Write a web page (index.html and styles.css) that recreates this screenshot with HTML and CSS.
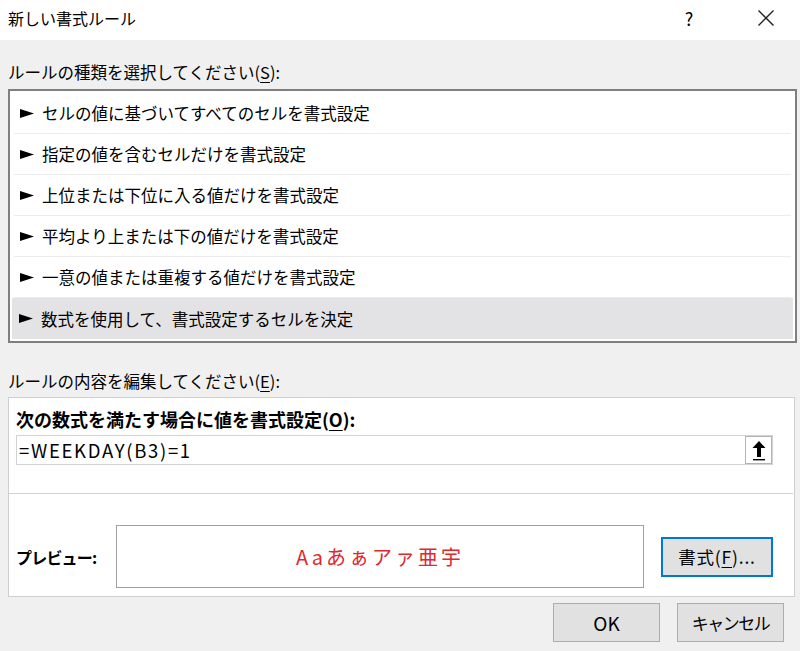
FILE: index.html
```html
<!DOCTYPE html>
<html lang="ja">
<head>
<meta charset="utf-8">
<link rel="stylesheet" href="styles.css">
</head>
<body>
<div class="dialog">
  <div class="titlebar">
    <div class="title">新しい書式ルール</div>
    <div class="tb-btn help">?</div>
    <div class="tb-btn close">
      <svg width="18" height="18" viewBox="0 0 18 18"><path d="M1.5 1.5 L16.5 16.5 M16.5 1.5 L1.5 16.5" stroke="#222" stroke-width="1.4" fill="none"/></svg>
    </div>
  </div>
  <div class="body">
    <div class="label lbl1">ルールの種類を選択してください(<u>S</u>):</div>
    <div class="listbox">
      <div class="row"><svg class="tri" width="14" height="9" viewBox="0 0 14 9"><path d="M0 0 L14 4.5 L0 9 Z" fill="#000"/></svg>セルの値に基づいてすべてのセルを書式設定</div>
      <div class="row"><svg class="tri" width="14" height="9" viewBox="0 0 14 9"><path d="M0 0 L14 4.5 L0 9 Z" fill="#000"/></svg>指定の値を含むセルだけを書式設定</div>
      <div class="row"><svg class="tri" width="14" height="9" viewBox="0 0 14 9"><path d="M0 0 L14 4.5 L0 9 Z" fill="#000"/></svg>上位または下位に入る値だけを書式設定</div>
      <div class="row"><svg class="tri" width="14" height="9" viewBox="0 0 14 9"><path d="M0 0 L14 4.5 L0 9 Z" fill="#000"/></svg>平均より上または下の値だけを書式設定</div>
      <div class="row"><svg class="tri" width="14" height="9" viewBox="0 0 14 9"><path d="M0 0 L14 4.5 L0 9 Z" fill="#000"/></svg>一意の値または重複する値だけを書式設定</div>
      <div class="row selected"><svg class="tri" width="14" height="9" viewBox="0 0 14 9"><path d="M0 0 L14 4.5 L0 9 Z" fill="#000"/></svg>数式を使用して、書式設定するセルを決定</div>
    </div>
    <div class="label lbl2">ルールの内容を編集してください(<u>E</u>):</div>
    <div class="panel">
      <div class="bold-label main">次の数式を満たす場合に値を書式設定(<u>O</u>):</div>
      <div class="input">
        <span class="formula">=WEEKDAY(B3)=1</span>
        <span class="refbtn">
          <svg width="18" height="22" viewBox="0 0 18 22"><path d="M9 2 L2.5 9 H7 V18 H11 V9 H15.5 Z" fill="#000"/><rect x="3" y="20" width="12" height="1.4" fill="#000"/></svg>
        </span>
      </div>
      <div class="sep"></div>
      <div class="preview-row">
        <div class="bold-label pv">プレビュー:</div>
        <div class="preview">Aaあぁアァ亜宇</div>
        <div class="btn fmt">書式(<u>F</u>)...</div>
      </div>
    </div>
    <div class="buttons">
      <div class="btn ok">OK</div>
      <div class="btn cancel">キャンセル</div>
    </div>
  </div>
</div>
</body>
</html>
```

FILE: styles.css
```css
html, body {
  margin: 0;
  padding: 0;
  width: 800px;
  height: 651px;
  overflow: hidden;
  background: #f0f0f0;
}
.dialog {
  font-family: "Noto Sans CJK JP", "Noto Sans", sans-serif;
  font-size: 16.5px;
  color: #000;
  width: 800px;
  height: 651px;
}
u { text-decoration-thickness: 1px; text-underline-offset: 3px; }
.titlebar {
  height: 40px;
  background: #fff;
  display: flex;
  align-items: center;
}
.title {
  padding-left: 8px;
  flex: 1;
  font-size: 16px;
  line-height: 20px;
  margin-top: -4px;
}
.tb-btn {
  display: flex;
  align-items: center;
  justify-content: center;
  margin-top: -4px;
}
.help {
  width: 30px;
  font-size: 18px;
  margin-right: 47px;
}
.close {
  width: 30px;
  margin-right: 19px;
}
.body {
  padding: 0 5px 0 8px;
}
.label {
  line-height: 20px;
  height: 20px;
}
.lbl1 { margin-top: 22px; margin-bottom: 7px; }
.listbox {
  border: 2px solid #7f7f7f;
  background: #fff;
  padding: 2px 2px;
  width: 781px;
}
.row {
  height: 40px;
  border-bottom: 1px solid #ececec;
  display: flex;
  align-items: center;
  margin: 0 2px;
  padding-left: 4px;
  line-height: 20px;
}
.row:last-child { border-bottom: none; height: 41px; }
.row.selected { background: #e3e3e6; margin: 0; padding-left: 5px; }
.tri {
  margin-left: 2px;
  margin-right: 8px;
  flex: none;
}
.lbl2 { margin-top: 28px; margin-bottom: 6px; }
.panel {
  background: #fff;
  border: 1px solid #cfcfcf;
  width: 785px;
  height: 198px;
  padding: 0;
}
.bold-label {
  font-weight: bold;
  line-height: 20px;
}
.main {
  font-size: 18px;
  margin: 11px 0 0 7px;
}
.input {
  margin: 6px 0 0 7px;
  width: 755px;
  height: 28px;
  border: 1px solid #d2d2d2;
  display: flex;
  align-items: center;
  justify-content: space-between;
}
.formula {
  font-size: 18.5px;
  padding-left: 2px;
  letter-spacing: 1.7px;
}
.refbtn {
  width: 25px;
  height: 26px;
  border: 1px solid #b4b4b4;
  display: flex;
  align-items: center;
  justify-content: center;
}
.sep {
  margin-top: 28px;
  height: 1px;
  background: #d0d0d0;
  width: 784px;
}
.preview-row {
  display: flex;
  align-items: center;
  margin-top: 31px;
  padding-left: 7px;
}
.pv { width: 100px; font-size: 16px; letter-spacing: -0.8px; }
.preview {
  width: 526px;
  height: 61px;
  border: 1px solid #a0a0a0;
  display: flex;
  align-items: center;
  justify-content: center;
  color: #e0282c;
  font-size: 20px;
  letter-spacing: 3px;
}
.btn {
  display: flex;
  align-items: center;
  justify-content: center;
  background: #e1e1e1;
  border: 1px solid #adadad;
  box-sizing: border-box;
}
.fmt {
  margin-left: 17px;
  width: 112px;
  height: 40px;
  border: 2px solid #0078d7;
  font-size: 17.5px;
  letter-spacing: 0.8px;
}
.buttons {
  display: flex;
  justify-content: flex-end;
  gap: 17px;
  margin-top: 6px;
  padding-right: 11px;
}
.ok, .cancel {
  width: 107px;
  height: 39px;
}
.ok { font-size: 19px; }
.cancel { letter-spacing: -1.5px; font-size: 17px; }
```
